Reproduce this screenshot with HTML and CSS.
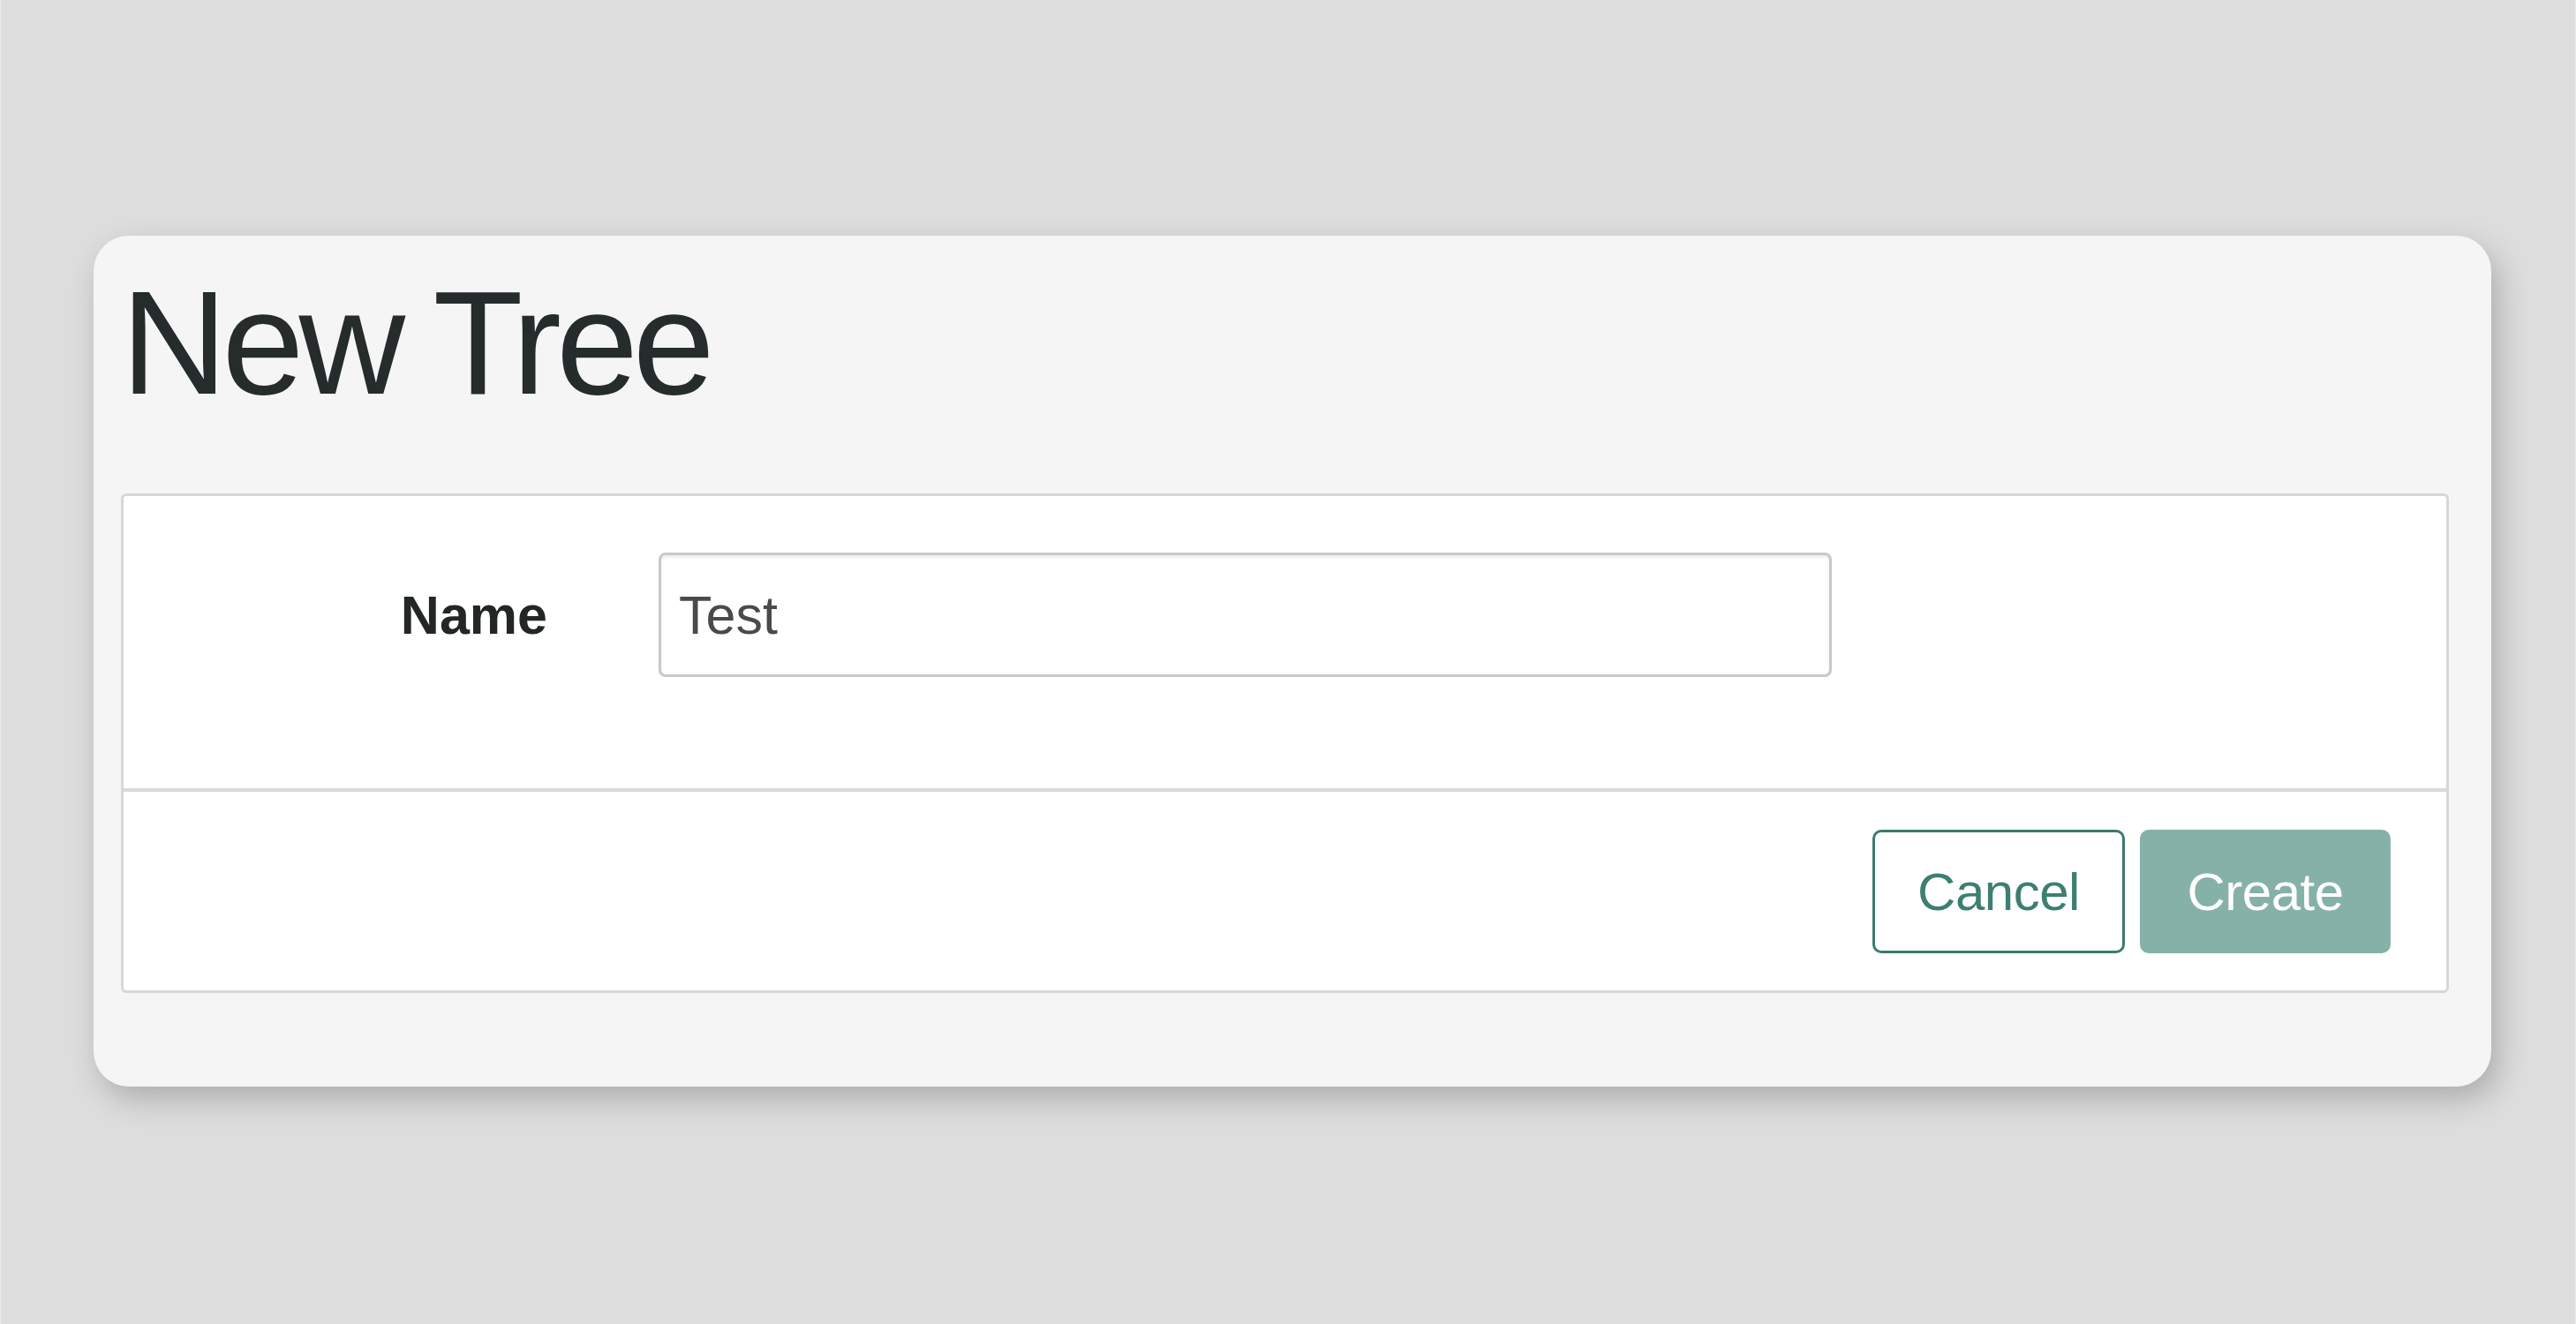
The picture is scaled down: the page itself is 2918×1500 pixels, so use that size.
FILE: index.html
```html
<!DOCTYPE html>
<html>
<head>
<meta charset="utf-8">
<link rel="stylesheet" href="styles.css">
</head>
<body>
<div class="page">
  <div class="card">
    <h1 class="title">New Tree</h1>
    <div class="panel">
      <div class="panel-body">
        <div class="form-row">
          <label class="label" for="name">Name</label>
          <input class="input" id="name" type="text" value="Test">
        </div>
      </div>
      <div class="panel-footer">
        <button class="btn btn-outline">Cancel</button>
        <button class="btn btn-primary">Create</button>
      </div>
    </div>
  </div>
</div>
</body>
</html>
```
FILE: styles.css
```css
html, body {
  margin: 0;
  padding: 0;
  background: #dddddd;
  font-family: "Liberation Sans", Arial, sans-serif;
}
.page {
  box-sizing: border-box;
  min-height: 100vh;
  padding: 267px 0 0 105px;
  border-left: 1px solid #ebebeb;
  border-right: 1px solid #ebebeb;
}
.card {
  width: 2716px;
  box-sizing: border-box;
  background: #f5f5f5;
  border-radius: 40px;
  padding: 38px 48px 106px 31px;
  box-shadow: 8px 14px 34px rgba(0, 0, 0, 0.22);
}
.title {
  margin: 0 0 87px;
  font-size: 167px;
  line-height: 167px;
  font-weight: 400;
  color: #262b2c;
  letter-spacing: -6px;
}
.panel {
  background: #ffffff;
  border: 3px solid #d7d7d7;
  border-radius: 6px;
}
.panel-body {
  padding: 64px 0 126px;
}
.form-row {
  display: flex;
  align-items: center;
  gap: 126px;
}
.label {
  width: 480px;
  text-align: right;
  font-size: 61px;
  font-weight: 700;
  color: #222627;
}
.input {
  width: 1329px;
  height: 141px;
  box-sizing: border-box;
  border: 3px solid #c9c9c9;
  border-radius: 8px;
  padding: 0 20px;
  font-family: "Liberation Sans", Arial, sans-serif;
  font-size: 61px;
  color: #4a4a4a;
  box-shadow: inset 0 3px 3px rgba(0, 0, 0, 0.07);
  outline: none;
}
.panel-footer {
  border-top: 4px solid #d9d9d9;
  padding: 43px 63px 42px 0;
  display: flex;
  justify-content: flex-end;
  gap: 17px;
}
.btn {
  height: 140px;
  box-sizing: border-box;
  border-radius: 10px;
  font-family: "Liberation Sans", Arial, sans-serif;
  font-size: 60px;
  letter-spacing: -0.5px;
  padding: 0;
  cursor: pointer;
}
.btn-outline {
  width: 286px;
  background: #ffffff;
  border: 3px solid #3b7b6d;
  color: #3d7f70;
}
.btn-primary {
  width: 284px;
  background: #86b1a9;
  border: 3px solid #86b1a9;
  color: #ffffff;
}
```
